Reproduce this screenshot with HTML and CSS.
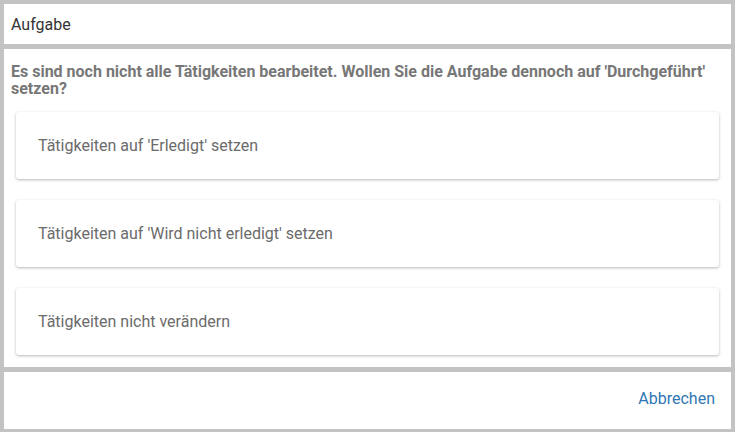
FILE: index.html
```html
<!DOCTYPE html>
<html lang="de">
<head>
<meta charset="utf-8">
<title>Aufgabe</title>
<link rel="stylesheet" href="styles.css">
</head>
<body>
<div class="dialog">
  <header class="panel header">Aufgabe</header>
  <main class="panel content">
    <p class="question">Es sind noch nicht alle Tätigkeiten bearbeitet. Wollen Sie die Aufgabe dennoch auf 'Durchgeführt' setzen?</p>
    <div class="options">
      <div class="card">Tätigkeiten auf 'Erledigt' setzen</div>
      <div class="card">Tätigkeiten auf 'Wird nicht erledigt' setzen</div>
      <div class="card">Tätigkeiten nicht verändern</div>
    </div>
  </main>
  <footer class="panel footer"><span class="cancel">Abbrechen</span></footer>
</div>
</body>
</html>
```
FILE: styles.css
```css
html, body {
  margin: 0;
  padding: 0;
  height: 100%;
}
body {
  background: #c3c3c3;
  font-family: Roboto, "Noto Sans", "Liberation Sans", sans-serif;
}
.dialog {
  box-sizing: border-box;
  height: 432px;
  padding: 4px 4px 3px 4px;
  display: flex;
  flex-direction: column;
  gap: 5px;
}
.panel {
  background: #fff;
}
.header {
  height: 40px;
  display: flex;
  align-items: center;
  padding: 0 7px;
  font-size: 16px;
  color: #333;
  flex: none;
}
.content {
  height: 318px;
  box-sizing: border-box;
  padding: 14px 7px 0 7px;
  flex: none;
}
.question {
  margin: 0;
  font-size: 16px;
  font-weight: bold;
  line-height: 17px;
  color: #777;
}
.options {
  margin-top: 15px;
  padding: 0 5px;
  display: flex;
  flex-direction: column;
  gap: 21px;
}
.card {
  height: 67px;
  box-sizing: border-box;
  display: flex;
  align-items: center;
  padding: 0 22px;
  border-radius: 3px;
  background: #fff;
  box-shadow: 0 1px 3px rgba(0, 0, 0, 0.28);
  font-size: 16px;
  color: #6b6b6b;
}
.footer {
  flex: 1;
  display: flex;
  align-items: center;
  justify-content: flex-end;
  padding: 0 16px 4px 0;
}
.cancel {
  font-size: 16px;
  color: #2f77b3;
}
```
